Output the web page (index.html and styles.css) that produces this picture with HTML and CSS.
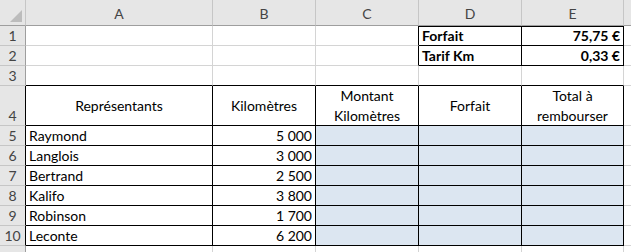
FILE: index.html
```html
<!DOCTYPE html>
<html lang="fr">
<head>
<meta charset="utf-8">
<link rel="stylesheet" href="styles.css">
</head>
<body>
<div class="sheet">
  <div class="hd corner"><span class="tri"></span></div>
  <div class="hd col">A</div>
  <div class="hd col">B</div>
  <div class="hd col">C</div>
  <div class="hd col">D</div>
  <div class="hd col">E</div>
  <div class="hd col last"></div>

  <div class="hd row">1</div>
  <div class="c"></div>
  <div class="c"></div>
  <div class="c br"></div>
  <div class="c bt br bb b">Forfait</div>
  <div class="c bt br bb b r">75,75 €</div>
  <div class="c last"></div>

  <div class="hd row">2</div>
  <div class="c"></div>
  <div class="c"></div>
  <div class="c br"></div>
  <div class="c br bb b">Tarif Km</div>
  <div class="c br bb b r">0,33 €</div>
  <div class="c last"></div>

  <div class="hd row">3</div>
  <div class="c bb"></div>
  <div class="c bb"></div>
  <div class="c bb"></div>
  <div class="c bb"></div>
  <div class="c bb"></div>
  <div class="c last"></div>

  <div class="hd row bottom brk">4</div>
  <div class="c k th">Représentants</div>
  <div class="c k th">Kilomètres</div>
  <div class="c k th">Montant<br>Kilomètres</div>
  <div class="c k th">Forfait</div>
  <div class="c k th">Total à<br>rembourser</div>
  <div class="c last"></div>

  <div class="hd row brk">5</div>
  <div class="c k">Raymond</div>
  <div class="c k r">5 000</div>
  <div class="c k f"></div>
  <div class="c k f"></div>
  <div class="c k f"></div>
  <div class="c last"></div>

  <div class="hd row brk">6</div>
  <div class="c k">Langlois</div>
  <div class="c k r">3 000</div>
  <div class="c k f"></div>
  <div class="c k f"></div>
  <div class="c k f"></div>
  <div class="c last"></div>

  <div class="hd row brk">7</div>
  <div class="c k">Bertrand</div>
  <div class="c k r">2 500</div>
  <div class="c k f"></div>
  <div class="c k f"></div>
  <div class="c k f"></div>
  <div class="c last"></div>

  <div class="hd row brk">8</div>
  <div class="c k">Kalifo</div>
  <div class="c k r">3 800</div>
  <div class="c k f"></div>
  <div class="c k f"></div>
  <div class="c k f"></div>
  <div class="c last"></div>

  <div class="hd row brk">9</div>
  <div class="c k">Robinson</div>
  <div class="c k r">1 700</div>
  <div class="c k f"></div>
  <div class="c k f"></div>
  <div class="c k f"></div>
  <div class="c last"></div>

  <div class="hd row brk">10</div>
  <div class="c k">Leconte</div>
  <div class="c k r">6 200</div>
  <div class="c k f"></div>
  <div class="c k f"></div>
  <div class="c k f"></div>
  <div class="c last"></div>

  <div class="hd row"></div>
  <div class="c"></div>
  <div class="c"></div>
  <div class="c"></div>
  <div class="c"></div>
  <div class="c"></div>
  <div class="c last"></div>
</div>
</body>
</html>
```

FILE: styles.css
```css
html, body {
  margin: 0;
  padding: 0;
  background: #ffffff;
}
.sheet {
  display: grid;
  grid-template-columns: 26px 187px 103px 103px 103px 102px 1fr;
  grid-template-rows: 26px 20px 20px 20px 40px 20px 20px 20px 20px 20px 20px 20px;
  width: 631px;
  height: 252px;
  overflow: hidden;
  font-family: Lato, "Open Sans", sans-serif;
  font-size: 14px;
  color: #000;
}
.sheet > div {
  box-sizing: border-box;
  border-right: 1px solid #d4d4d4;
  border-bottom: 1px solid #d4d4d4;
  display: flex;
  align-items: center;
  white-space: nowrap;
  overflow: hidden;
}
.hd {
  background: #e6e6e6;
  color: #444;
}
.sheet > .col {
  justify-content: center;
  border-right-color: #c6c6c6;
  border-bottom-color: #9e9e9e;
  padding-top: 1px;
}
.sheet > .corner {
  border-bottom-color: #9e9e9e;
  border-right-color: #c6c6c6;
  position: relative;
}
.tri {
  position: absolute;
  right: 3px;
  bottom: 3px;
  width: 0;
  height: 0;
  border-left: 12px solid transparent;
  border-bottom: 12px solid #bcbcbc;
}
.sheet > .row {
  justify-content: center;
  border-right-color: #9e9e9e;
  border-bottom-color: #c6c6c6;
}
.sheet > .bottom {
  align-items: flex-end;
  padding-bottom: 1px;
}
.sheet > .brk {
  border-right-color: #000;
}
.c {
  padding: 0 3px;
}
.sheet > .last {
  border-right: none;
}
.r {
  justify-content: flex-end;
}
.b {
  font-weight: 700;
}
.sheet > .br {
  border-right-color: #000;
}
.sheet > .bb {
  border-bottom-color: #000;
}
.bt {
  box-shadow: inset 0 1px 0 #000;
}
.sheet > .k {
  border-right-color: #000;
  border-bottom-color: #000;
}
.th {
  justify-content: center;
  text-align: center;
  line-height: 20px;
}
.f {
  background: #dce6f1;
}
```
